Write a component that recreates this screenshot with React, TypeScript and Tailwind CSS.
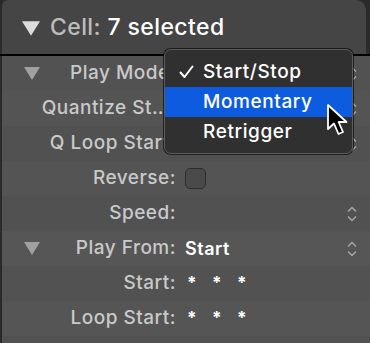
import React from "react";

const Tri = ({ cls }: { cls: string }) => (
  <svg width="16" height="13" viewBox="0 0 16 13" className={cls}>
    <polygon points="0,0 16,0 8,13" fill="currentColor" />
  </svg>
);

const UpDown = () => (
  <svg width="12" height="18" viewBox="0 0 12 18" className="text-[#a8a8a8]">
    <polyline points="2,6.5 6,2.5 10,6.5" fill="none" stroke="currentColor" strokeWidth="1.4" />
    <polyline points="2,11.5 6,15.5 10,11.5" fill="none" stroke="currentColor" strokeWidth="1.4" />
  </svg>
);

type Row = {
  label: string;
  tri?: boolean;
  value?: React.ReactNode;
  chevron?: boolean;
  bg: string;
};

const stars = (
  <span className="flex gap-[15px] text-white text-[17px] font-bold pl-[2px]">
    <span>*</span>
    <span>*</span>
    <span>*</span>
  </span>
);

export default function App() {
  const rows: Row[] = [
    { label: "Play Mode:", tri: true, chevron: true, bg: "bg-[#525252]" },
    { label: "Quantize St…:", chevron: true, bg: "bg-[#545454]" },
    { label: "Q Loop Start:", chevron: true, bg: "bg-[#515151]" },
    {
      label: "Reverse:",
      value: (
        <div className="w-[21px] h-[21px] rounded-[5px] bg-[#4a4a4a] border border-[#2c2c2c]" />
      ),
      bg: "bg-[#545454]",
    },
    { label: "Speed:", chevron: true, bg: "bg-[#515151]" },
    {
      label: "Play From:",
      tri: true,
      value: <span className="text-white font-semibold text-[18px]">Start</span>,
      chevron: true,
      bg: "bg-[#565656]",
    },
    { label: "Start:", value: stars, bg: "bg-[#525252]" },
    { label: "Loop Start:", value: stars, bg: "bg-[#555555]" },
    { label: "", bg: "bg-[#515151]" },
  ];

  return (
    <div
      className="relative w-[370px] h-[343px] overflow-hidden bg-[#2a2a2a]"
      style={{ fontFamily: "Inter, 'Liberation Sans', sans-serif" }}
    >
      <div className="ml-[2px] mr-[4px] h-[54px] bg-[#454545] rounded-tl-[6px] rounded-tr-[10px] flex items-center pl-[20px] gap-[10px]">
        <Tri cls="text-[#dcdcdc] mt-[2px] w-[18px] h-[15px]" />
        <span className="text-[23px] tracking-[0.4px] font-medium">
          <span className="text-[#bdbdbd]">Cell:</span>
          <span className="text-white"> 7 selected</span>
        </span>
      </div>
      <div className="h-[2px] bg-black" />
      <div className="ml-[2px] flex flex-col">
        {rows.map((r, i) => (
          <div key={i} className={`h-[35px] flex items-center ${r.bg} text-[19px] tracking-[0.5px] font-medium`}>
            <div className="w-[174px] flex items-center pl-[22px] shrink-0">
              <div className="w-[16px] shrink-0">{r.tri && <Tri cls="text-[#a0a0a0]" />}</div>
              <div className="flex-1 text-right text-[#c9c9c9] whitespace-nowrap overflow-hidden">
                {r.label}
              </div>
            </div>
            <div className="flex-1 pl-[9px] flex items-center">{r.value}</div>
            <div className="w-[24px] mr-[6px] flex justify-center">{r.chevron && <UpDown />}</div>
          </div>
        ))}
      </div>

      {/* Popup menu */}
      <div className="absolute left-[164px] top-[49px] w-[189px] h-[105px] rounded-[7px] bg-[#303030] border border-[#5c5c5c] shadow-[0_0_0_1px_rgba(0,0,0,0.6)] pt-[7px] text-[19px] tracking-[0.6px] font-medium text-white">
        <div className="h-[30px] flex items-center">
          <div className="w-[38px] flex justify-center pl-[4px]">
            <svg width="15" height="14" viewBox="0 0 15 14">
              <polyline points="1.5,7.5 5.5,12 13.5,1.5" fill="none" stroke="white" strokeWidth="2" strokeLinecap="round" strokeLinejoin="round" />
            </svg>
          </div>
          <span>Start/Stop</span>
        </div>
        <div className="h-[30px] flex items-center bg-[#0d5ce0]">
          <div className="w-[38px]" />
          <span>Momentary</span>
        </div>
        <div className="h-[30px] flex items-center">
          <div className="w-[38px]" />
          <span>Retrigger</span>
        </div>
      </div>

      {/* Cursor */}
      <svg className="absolute left-[326px] top-[103px]" width="26" height="34" viewBox="0 0 26 34">
        <path
          d="M2 2 L2 26 L8 20.5 L12.5 31 L17 29 L12.6 19 L20.5 19 Z"
          fill="black"
          stroke="white"
          strokeWidth="1.8"
          strokeLinejoin="round"
        />
      </svg>
    </div>
  );
}
